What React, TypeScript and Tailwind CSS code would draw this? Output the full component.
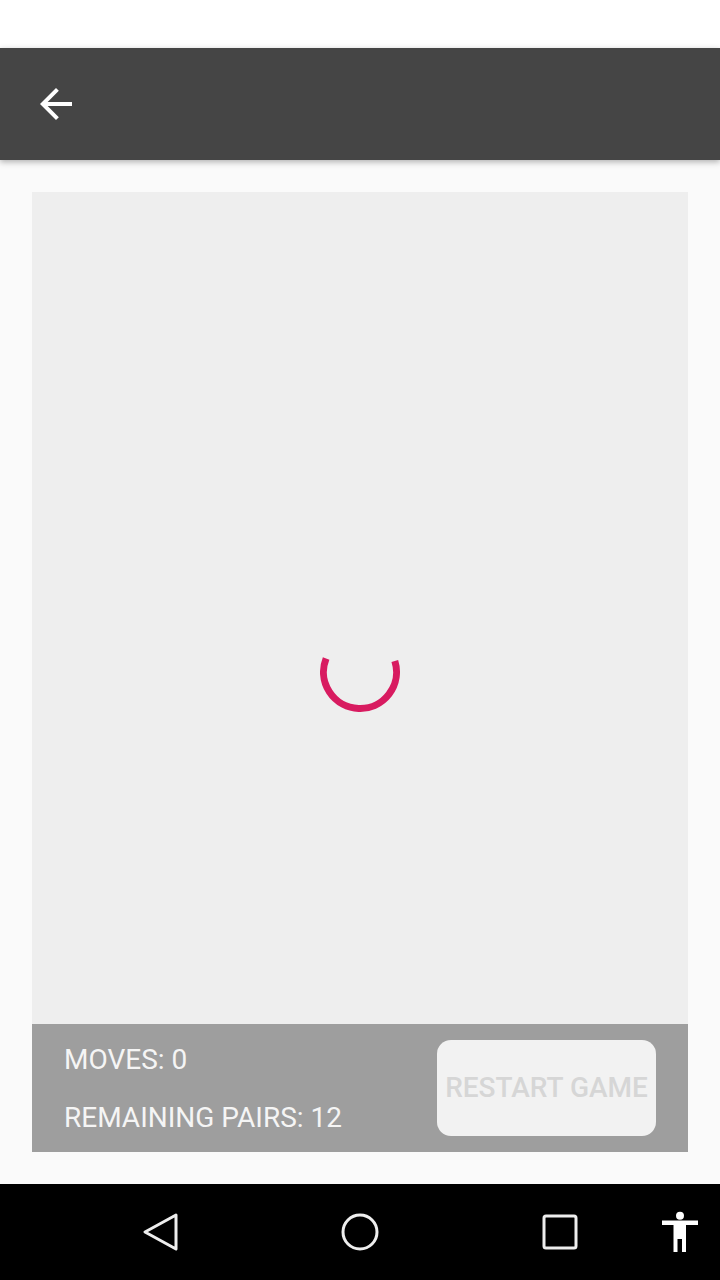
import React from "react";

export default function App() {
  return (
    <div className="flex h-[1280px] w-[720px] flex-col bg-[#fafafa] font-['Roboto',sans-serif]">
      {/* status bar */}
      <div className="h-12 bg-white" />

      {/* app bar */}
      <div className="relative z-10 flex h-28 items-center bg-[#454545] px-8 shadow-[0_2px_6px_rgba(0,0,0,0.3)]">
        <svg className="h-12 w-12" viewBox="0 0 24 24" fill="#ffffff">
          <path d="M20 11H7.83l5.59-5.59L12 4l-8 8 8 8 1.41-1.41L7.83 13H20v-2z" />
        </svg>
      </div>

      {/* content */}
      <div className="flex flex-1 flex-col px-8 pt-8 pb-8">
        <div className="flex flex-1 items-center justify-center bg-[#eeeeee] pt-[128px]">
          <svg className="h-20 w-20" viewBox="0 0 80 80">
            <path
              d="M 74.81 29.03 A 36.5 36.5 0 1 1 6.11 26.44"
              fill="none"
              stroke="#d81b60"
              strokeWidth={7}
            />
          </svg>
        </div>
        <div className="flex h-32 items-center justify-between bg-[#9e9e9e] pl-8 pr-8">
          <div className="flex flex-col gap-[23px] text-[28px] leading-[35px] text-[#f5f5f5]">
            <span>MOVES: 0</span>
            <span>REMAINING PAIRS: 12</span>
          </div>
          <button className="flex h-24 w-[219px] items-center justify-center rounded-[14px] bg-[#f2f2f2] text-[28px] font-medium text-[#d6d6d6]">
            RESTART GAME
          </button>
        </div>
      </div>

      {/* nav bar */}
      <div className="relative flex h-24 items-center bg-black">
        <div className="flex w-full items-center gap-[160px] pl-[140px]">
          <svg className="h-10 w-10" viewBox="0 0 40 40">
            <path d="M36 3 L5 20 L36 37 Z" fill="none" stroke="#eeeeee" strokeWidth={3} strokeLinejoin="round" />
          </svg>
          <svg className="h-10 w-10" viewBox="0 0 40 40">
            <circle cx="20" cy="20" r="17" fill="none" stroke="#eeeeee" strokeWidth={3} />
          </svg>
          <svg className="h-10 w-10" viewBox="0 0 40 40">
            <rect x="4" y="4" width="32" height="32" rx="2" fill="none" stroke="#eeeeee" strokeWidth={3} />
          </svg>
        </div>
        <svg className="absolute left-[656px] top-[20px] h-14 w-12" viewBox="0 0 48 56" fill="#ffffff">
          <circle cx="24" cy="11.7" r="4" />
          <path d="M6 16.5 H42 V21 H30 V48 H26 V35 H21.5 V48 H17.5 V21 H6 Z" />
        </svg>
      </div>
    </div>
  );
}
